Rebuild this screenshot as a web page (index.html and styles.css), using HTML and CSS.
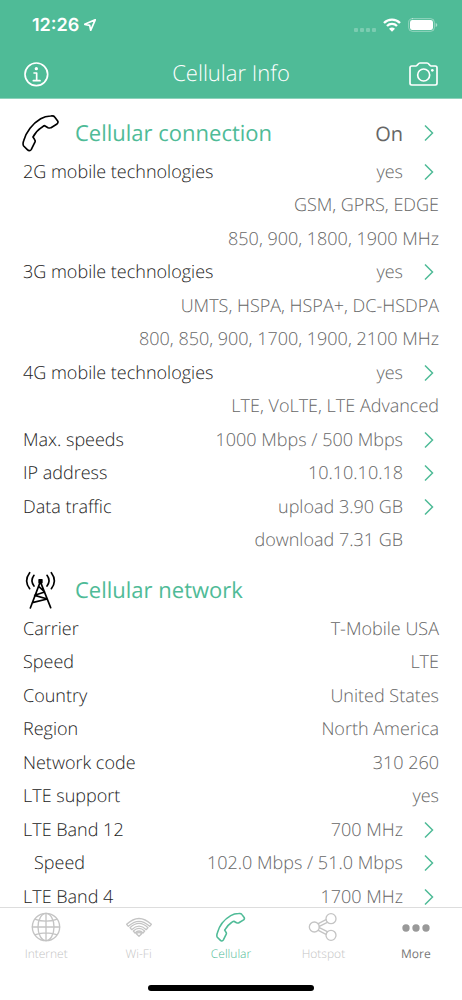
FILE: index.html
```html
<!DOCTYPE html>
<html lang="en">
<head>
  <meta charset="UTF-8" />
  <meta name="viewport" content="width=device-width, initial-scale=1.0"/>
  <title>Cellular Info</title>
  <link rel="stylesheet" href="styles.css">
</head>

<body>

<!-- shared shapes -->
<svg class="symbols" aria-hidden="true">
  <symbol id="phone" viewBox="66 38 114 114">
    <path d="M152 44C158 43 162 44 164 47L173 59C175 62 174 65 171 68L153 79C150 81 147 80 144 79L134 73C131 72 128 77 124 79C113 86 105 96 99 107L104 115C107 119 106 121 104 124L94 144C91 149 86 149 82 145L71 134C68 130 69 124 71 118C78 92 98 66 122 52C132 46 142 44 152 44Z"/>
  </symbol>
  <symbol id="chevron" viewBox="0 0 20 36">
    <path d="M2 3L17 18L2 33"/>
  </symbol>
</svg>

<header class="header">
  <div class="statusbar">
    <div class="clock">12:26
      <svg class="location" viewBox="0 0 36 36"><path d="M34 2L2 16L17 19L20 34Z"/></svg>
    </div>
    <div class="indicators">
      <span class="signal"><i></i><i></i><i></i><i></i></span>
      <svg class="wifi" viewBox="0 0 54 42">
        <path class="arc" d="M3 15A34 34 0 0 1 51 15M12 24A21 21 0 0 1 42 24"/>
        <path class="dot" d="M18 32Q27 25 36 32L27 41Z"/>
      </svg>
      <svg class="battery" viewBox="0 0 90 42">
        <rect class="shell" x="2" y="2" width="77" height="38" rx="11"/>
        <rect class="charge" x="6" y="6" width="69" height="30" rx="7"/>
        <path class="cap" d="M83 15Q88 17 88 21T83 27Z"/>
      </svg>
    </div>
  </div>
  <div class="navbar">
    <button class="icon-btn" aria-label="Info">
      <svg class="info" viewBox="0 0 75 75">
        <circle cx="37" cy="37" r="34"/>
        <path d="M30 33H38V56M28 56H48"/>
        <circle class="dot" cx="37" cy="20" r="5"/>
      </svg>
    </button>
    <h1>Cellular Info</h1>
    <button class="icon-btn" aria-label="Camera">
      <svg class="camera" viewBox="0 0 87 72">
        <path d="M8 12H21C26 12 27 3 33 3H54C60 3 61 12 66 12H79Q84 12 84 17V64Q84 69 79 69H8Q3 69 3 64V17Q3 12 8 12Z"/>
        <circle cx="44" cy="39" r="18"/>
        <circle class="dot" cx="70" cy="25" r="4"/>
      </svg>
    </button>
  </div>
</header>

<main class="content">
  <section>
    <a class="section-head" href="#connection">
      <svg class="section-icon"><use href="#phone"/></svg>
      <h2>Cellular connection</h2>
      <span class="state">On</span>
      <svg class="chevron"><use href="#chevron"/></svg>
    </a>
    <ul class="rows">
      <li><a href="#2g"><span class="label">2G mobile technologies</span><span class="value">yes</span><svg class="chevron"><use href="#chevron"/></svg></a></li>
      <li><span class="value">GSM, GPRS, EDGE</span></li>
      <li><span class="value">850, 900, 1800, 1900 MHz</span></li>
      <li><a href="#3g"><span class="label">3G mobile technologies</span><span class="value">yes</span><svg class="chevron"><use href="#chevron"/></svg></a></li>
      <li><span class="value">UMTS, HSPA, HSPA+, DC-HSDPA</span></li>
      <li><span class="value">800, 850, 900, 1700, 1900, 2100 MHz</span></li>
      <li><a href="#4g"><span class="label">4G mobile technologies</span><span class="value">yes</span><svg class="chevron"><use href="#chevron"/></svg></a></li>
      <li><span class="value">LTE, VoLTE, LTE Advanced</span></li>
      <li><a href="#speeds"><span class="label">Max. speeds</span><span class="value">1000 Mbps / 500 Mbps</span><svg class="chevron"><use href="#chevron"/></svg></a></li>
      <li><a href="#ip"><span class="label">IP address</span><span class="value">10.10.10.18</span><svg class="chevron"><use href="#chevron"/></svg></a></li>
      <li><a href="#traffic"><span class="label">Data traffic</span><span class="value">upload 3.90 GB</span><svg class="chevron"><use href="#chevron"/></svg></a></li>
      <li class="inset"><span class="value">download 7.31 GB</span></li>
    </ul>
  </section>

  <section>
    <div class="section-head">
      <svg class="section-icon" viewBox="66 30 114 114">
        <path d="M121 62L91 141M121 62L152 140M116 76L134 93L104 103L142 114L97 125"/>
        <path d="M89 35Q71 59 89 83M102 43Q90 59 102 75M141 43Q153 59 141 75M154 35Q172 59 154 83"/>
        <rect class="beacon" x="115" y="54" width="13" height="13" rx="2"/>
      </svg>
      <h2>Cellular network</h2>
    </div>
    <ul class="rows">
      <li><span class="label">Carrier</span><span class="value">T-Mobile USA</span></li>
      <li><span class="label">Speed</span><span class="value">LTE</span></li>
      <li><span class="label">Country</span><span class="value">United States</span></li>
      <li><span class="label">Region</span><span class="value">North America</span></li>
      <li><span class="label">Network code</span><span class="value">310 260</span></li>
      <li><span class="label">LTE support</span><span class="value">yes</span></li>
      <li><a href="#band12"><span class="label">LTE Band 12</span><span class="value">700 MHz</span><svg class="chevron"><use href="#chevron"/></svg></a></li>
      <li><a href="#band12-speed"><span class="label sub">Speed</span><span class="value">102.0 Mbps / 51.0 Mbps</span><svg class="chevron"><use href="#chevron"/></svg></a></li>
      <li><a href="#band4"><span class="label">LTE Band 4</span><span class="value">1700 MHz</span><svg class="chevron"><use href="#chevron"/></svg></a></li>
    </ul>
  </section>
</main>

<nav class="tabbar">
  <div class="tabs">
    <a class="tab" href="#internet">
      <svg viewBox="0 0 90 90">
        <circle cx="45" cy="45" r="41"/>
        <ellipse cx="45" cy="45" rx="24" ry="41"/>
        <path d="M45 4V86M4 45H86M13 22Q45 33 77 22M13 68Q45 57 77 68"/>
      </svg>
      Internet
    </a>
    <a class="tab" href="#wifi">
      <svg viewBox="0 0 90 90">
        <path d="M8 37Q45 2 82 37L77 43Q45 13 13 43ZM18 47Q45 21 72 47L67 53Q45 32 23 53ZM28 57Q45 41 62 57L57 63Q45 51 33 63ZM37 65Q45 59 53 65L45 73Z"/>
      </svg>
      Wi-Fi
    </a>
    <a class="tab active" href="#cellular">
      <svg class="phone"><use href="#phone"/></svg>
      Cellular
    </a>
    <a class="tab" href="#hotspot">
      <svg viewBox="0 0 90 90">
        <circle cx="19" cy="45" r="15"/>
        <circle cx="69" cy="20" r="15"/>
        <circle cx="69" cy="70" r="15"/>
        <path d="M31 35L54 23M34 43L58 31M34 47L58 59M31 55L54 67"/>
      </svg>
      Hotspot
    </a>
    <a class="tab more" href="#more">
      <svg viewBox="0 0 90 90">
        <circle cx="15" cy="48" r="11"/>
        <circle cx="45" cy="48" r="11"/>
        <circle cx="75" cy="48" r="11"/>
      </svg>
      More
    </a>
  </div>
  <div class="home-indicator"></div>
</nav>

</body>
</html>
```

FILE: styles.css
```css
* {
    box-sizing: border-box;
}

body {
    margin: 0;
    height: 100vh;
    display: flex;
    flex-direction: column;
    background: white;
    color: #222;
    font-family: 'Open Sans', sans-serif;
    font-size: 18px;
    font-weight: 300;
    text-rendering: geometricPrecision;
    overflow: hidden;
}

h1, h2 {
    margin: 0;
    font-size: 22px;
}

a {
    color: inherit;
    text-decoration: none;
}

svg {
    flex: none;
    fill: none;
    stroke: currentColor;
    stroke-linecap: round;
    stroke-linejoin: round;
}

.symbols {
    display: none;
}

/* Header */
.header {
    flex: none;
    background: #4fbb97;
    border-bottom: 1px solid #8dd2bb;
    color: white;
}

.statusbar {
    height: 50px;
    padding: 0 24px 0 32px;
    display: flex;
    justify-content: space-between;
    align-items: center;
}

.clock {
    display: flex;
    align-items: center;
    gap: 5px;
    font-family: Inter, sans-serif;
    font-size: 18px;
    font-weight: 600;
}

.location {
    width: 12px;
    height: 12px;
    stroke-width: 5;
}

.indicators {
    display: flex;
    align-items: center;
    gap: 7px;
}

.signal {
    display: flex;
    gap: 2px;
    padding-top: 9px;
}

.signal i {
    width: 4px;
    height: 4px;
    border-radius: 1px;
    background: rgba(255, 255, 255, 0.25);
}

.wifi {
    width: 18px;
    height: 14px;
    stroke-width: 7;
    stroke-linecap: butt;
}

.battery {
    width: 30px;
    height: 14px;
}

.battery .shell {
    stroke: rgba(255, 255, 255, 0.4);
    stroke-width: 3;
}

.wifi .dot, .battery .charge, .battery .cap {
    fill: white;
    stroke: none;
}

.battery .cap {
    opacity: 0.5;
}

.navbar {
    height: 48px;
    padding: 0 24px;
    display: grid;
    grid-template-columns: 1fr auto 1fr;
    align-items: center;
}

.navbar h1 {
    padding-bottom: 3px;
    font-weight: 300;
}

.icon-btn {
    display: flex;
    justify-self: start;
    padding: 0;
    border: none;
    background: none;
    color: white;
    cursor: pointer;
}

.icon-btn:last-child {
    justify-self: end;
}

.icon-btn svg {
    stroke-width: 5;
}

.icon-btn .dot {
    fill: currentColor;
    stroke: none;
}

.info {
    width: 25px;
    height: 25px;
}

.camera {
    width: 29px;
    height: 24px;
}

/* Lists */
.content {
    flex: 1;
    min-height: 0;
    padding-top: 1px;
    overflow-y: auto;
    scrollbar-width: none;
}

.section-head {
    height: 55px;
    padding: 11px 23px 0 22px;
    display: flex;
    align-items: center;
}

.section-head h2 {
    flex: 1;
    color: #4fbb97;
    font-weight: 400;
}

.section-icon {
    width: 38px;
    height: 38px;
    margin-right: 15px;
    color: black;
    stroke-width: 5;
}

.beacon {
    fill: black;
    stroke: none;
}

.state {
    color: #666;
    font-size: 20px;
    font-weight: 400;
}

.rows {
    margin: 0;
    padding: 0 23px;
    list-style: none;
}

.rows li {
    height: 33px;
    display: flex;
    align-items: center;
}

.rows li:nth-child(even) {
    height: 34px;
}

.rows li a {
    flex: 1;
    display: flex;
    align-items: center;
}

.rows .inset {
    padding-right: 36px;
}

.label.sub {
    padding-left: 11px;
}

.value {
    margin-left: auto;
    color: #666;
}

.chevron {
    width: 10px;
    height: 18px;
    margin: 0 5px 0 21px;
    color: #4fbb97;
    stroke-width: 3;
    stroke-linecap: butt;
    stroke-linejoin: miter;
}

/* Bottom tabs */
.tabbar {
    flex: none;
    border-top: 1px solid #ddd;
    background: white;
}

.tabs {
    display: flex;
    padding-top: 4px;
}

.tab {
    flex: 1;
    display: flex;
    flex-direction: column;
    align-items: center;
    gap: 3px;
    color: #c4c4c4;
    font-size: 12px;
    line-height: 18px;
}

.tab svg {
    width: 30px;
    height: 30px;
    stroke-width: 4;
}

.tab.active {
    color: #4fbb97;
}

.tab .phone {
    stroke-width: 6;
}

.tab.more {
    color: #777;
    font-weight: 400;
}

.tab.more svg {
    fill: #999;
    stroke: none;
}

.home-indicator {
    width: 166px;
    height: 6px;
    margin: 22px auto 9px;
    border-radius: 3px;
    background: black;
}
```
